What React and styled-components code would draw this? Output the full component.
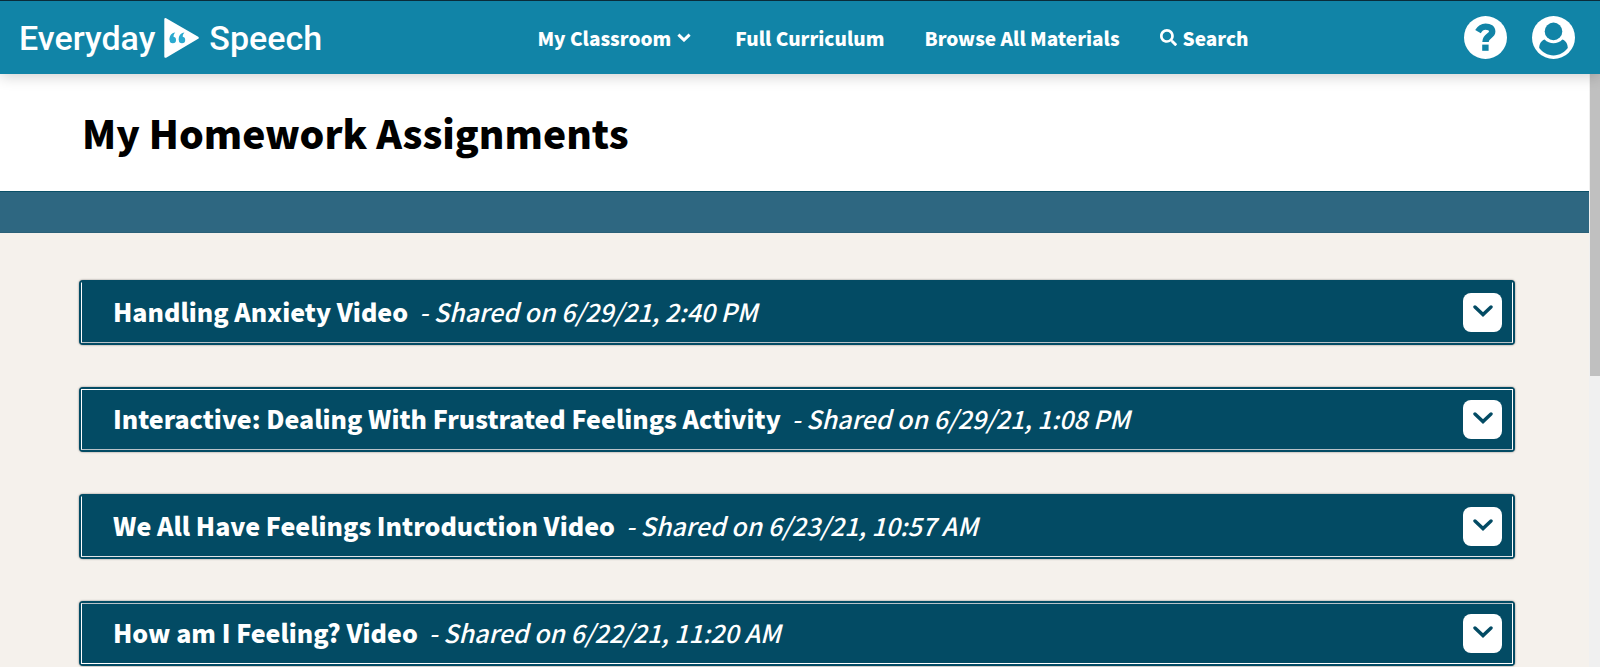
import React from 'react'
import styled, { createGlobalStyle } from 'styled-components'
import { FaSearch } from 'react-icons/fa'

const assignments = [
  { title: 'Handling Anxiety Video', shared: '6/29/21, 2:40 PM', top: 'transparent', bottom: '#b9c2c8' },
  { title: 'Interactive: Dealing With Frustrated Feelings Activity', shared: '6/29/21, 1:08 PM', top: '#fff', bottom: '#b9c2c8' },
  { title: 'We All Have Feelings Introduction Video', shared: '6/23/21, 10:57 AM', top: 'transparent', bottom: '#dfe4e7' },
  { title: 'How am I Feeling? Video', shared: '6/22/21, 11:20 AM', top: '#b9c2c8', bottom: '#fff' },
]

function PlayIcon() {
  return (
    <svg width="36" height="42" viewBox="0 0 36 42" aria-hidden="true">
      <path d="M1.5 2.2 L33.6 20.8 L1.5 39.6 Z" fill="#fff" stroke="#fff" strokeWidth="2.4" strokeLinejoin="round" />
      <g fill="#2aa9cf">
        <circle cx="8.8" cy="23" r="3.2" />
        <path d="M5.6 23 C5.2 19 7.4 16 11.2 15.6 C9.8 17.2 9.4 18.6 9.6 20.6 Z" />
        <circle cx="18" cy="23" r="3.2" />
        <path d="M14.8 23 C14.4 19 16.6 16 20.4 15.6 C19 17.2 18.6 18.6 18.8 20.6 Z" />
      </g>
    </svg>
  )
}

function HelpIcon() {
  return (
    <svg width="43" height="43" viewBox="0 0 43 43" aria-hidden="true">
      <circle cx="21.5" cy="21.5" r="21.5" fill="#fff" />
      <path d="M14 15.6 C16 12 18.4 10.6 21.6 10.6 C25.6 10.6 28.2 12.4 28.2 15.6 C28.2 20.4 21.5 19.6 21.5 26" fill="none" stroke="#1184a7" strokeWidth="6.4" />
      <rect x="18.2" y="28.6" width="6.4" height="6.2" fill="#1184a7" />
    </svg>
  )
}

function UserIcon() {
  return (
    <svg width="43" height="43" viewBox="0 0 43 43" aria-hidden="true">
      <circle cx="21.5" cy="21.5" r="21.5" fill="#fff" />
      <path d="M12.6 23.4 C8.6 24.8 7.2 28.4 7.2 32 C10.6 36.4 15.4 39.4 21.5 39.4 C27.6 39.4 32.4 36.4 35.8 32 C35.8 28.4 34.4 24.8 30.4 23.4 C25.6 28.4 17.4 28.4 12.6 23.4 Z" fill="#1184a7" />
      <circle cx="21.5" cy="15.4" r="8.8" fill="#1184a7" />
    </svg>
  )
}

function App() {
  return (
    <Page>
      <GlobalStyle />
      <Header>
        <Logo href="#home">
          <span>Everyday</span>
          <PlayIcon />
          <span>Speech</span>
        </Logo>
        <Nav>
          <NavLink href="#classroom" $menu>
            My Classroom
            <svg width="14" height="9" viewBox="0 0 14 9" aria-hidden="true">
              <path d="M1.4 1.6 L7 7 L12.6 1.6" fill="none" stroke="#fff" strokeWidth="3" />
            </svg>
          </NavLink>
          <NavLink href="#curriculum">Full Curriculum</NavLink>
          <NavLink href="#materials">Browse All Materials</NavLink>
          <NavLink href="#search"><FaSearch size={17} /> Search</NavLink>
        </Nav>
        <Actions>
          <IconButton aria-label="Help"><HelpIcon /></IconButton>
          <IconButton aria-label="Account"><UserIcon /></IconButton>
        </Actions>
      </Header>
      <Body>
        <Main>
          <TitleBar>
            <Title>My Homework Assignments</Title>
          </TitleBar>
          <Band />
          <List>
            {assignments.map((item) => (
              <Row key={item.title}>
                <RowInner $top={item.top} $bottom={item.bottom}>
                  <RowText>
                    <RowTitle>{item.title}</RowTitle>
                    <Shared>- Shared on {item.shared}</Shared>
                  </RowText>
                  <Toggle aria-label={`Expand ${item.title}`}>
                    <svg width="20" height="12" viewBox="0 0 20 12" aria-hidden="true">
                      <path d="M2 2 L10 9.6 L18 2" fill="none" stroke="#034b64" strokeWidth="3.4" strokeLinecap="round" />
                    </svg>
                  </Toggle>
                </RowInner>
              </Row>
            ))}
          </List>
        </Main>
        <Track>
          <Thumb />
        </Track>
      </Body>
    </Page>
  )
}

const GlobalStyle = createGlobalStyle`
  * {
    box-sizing: border-box;
  }

  body {
    margin: 0;
    background: #f5f1ec;
    font-family: "Noto Sans CJK SC", "Noto Sans", sans-serif;
  }
`;

const Page = styled.div`
  min-height: 100vh;
  display: flex;
  flex-direction: column;
`;

const Header = styled.header`
  position: relative;
  z-index: 1;
  display: flex;
  justify-content: space-between;
  align-items: center;
  height: 74px;
  padding: 0 25px 0 19px;
  background: #1184a7;
  border-top: 1px solid #0a2c3a;
  box-shadow: 0 2px 14px rgba(0, 0, 0, 0.2);
`;

const Logo = styled.a`
  display: flex;
  align-items: center;
  gap: 9px;
  color: #fff;
  font-family: Roboto, sans-serif;
  font-size: 34px;
  font-weight: 500;
  line-height: 40px;
  text-decoration: none;
`;

const Nav = styled.nav`
  display: flex;
  gap: 40px;
`;

const NavLink = styled.a`
  display: flex;
  align-items: center;
  gap: 6px;
  padding-right: ${(props) => (props.$menu ? '4px' : '0')};
  color: #fff;
  font-size: 19px;
  line-height: 28px;
  font-weight: 900;
  text-decoration: none;
`;

const Actions = styled.div`
  display: flex;
  align-items: center;
  gap: 25px;
`;

const IconButton = styled.button`
  display: flex;
  padding: 0;
  border: none;
  background: none;
  color: #fff;
  cursor: pointer;
`;

const Body = styled.div`
  flex: 1;
  display: flex;
`;

const Main = styled.main`
  flex: 1;
`;

const TitleBar = styled.div`
  padding: 28px 82px 29px;
  background: #fff;
`;

const Title = styled.h1`
  margin: 0;
  color: #000;
  font-size: 39px;
  line-height: 60px;
  font-weight: 900;
`;

const Band = styled.div`
  height: 42px;
  background: #2e6781;
  border-top: 1px solid #0b5068;
  border-bottom: 1px solid #2a6078;
`;

const List = styled.ul`
  display: flex;
  flex-direction: column;
  gap: 42px;
  margin: 0;
  padding: 47px 74px 0 79px;
  list-style: none;
`;

const Row = styled.li`
  padding: 2px;
  background: #034b64;
  border-radius: 4px;
  box-shadow: 0 0 2px rgba(0, 0, 0, 0.5);
`;

const RowInner = styled.div`
  display: flex;
  justify-content: space-between;
  align-items: center;
  height: 61px;
  padding: 0 10px 0 31px;
  border: 1px solid #fff;
  border-top-color: ${(props) => props.$top};
  border-bottom-color: ${(props) => props.$bottom};
`;

const RowText = styled.div`
  display: flex;
  align-items: baseline;
  gap: 11px;
  padding-bottom: 4px;
  color: #fff;
  font-size: 25px;
  line-height: 40px;
`;

const RowTitle = styled.span`
  font-weight: 900;
`;

const Shared = styled.em`
  font-style: italic;
  font-weight: 500;
`;

const Toggle = styled.button`
  display: flex;
  justify-content: center;
  align-items: center;
  width: 39px;
  height: 39px;
  padding: 0 0 4px;
  border: none;
  border-radius: 8px;
  background: #fff;
  cursor: pointer;
`;

const Track = styled.div`
  width: 11px;
  padding-left: 1px;
  background: #f0f0f0;
`;

const Thumb = styled.div`
  height: 51%;
  background: #c0c0c0;
`;

export default App;
